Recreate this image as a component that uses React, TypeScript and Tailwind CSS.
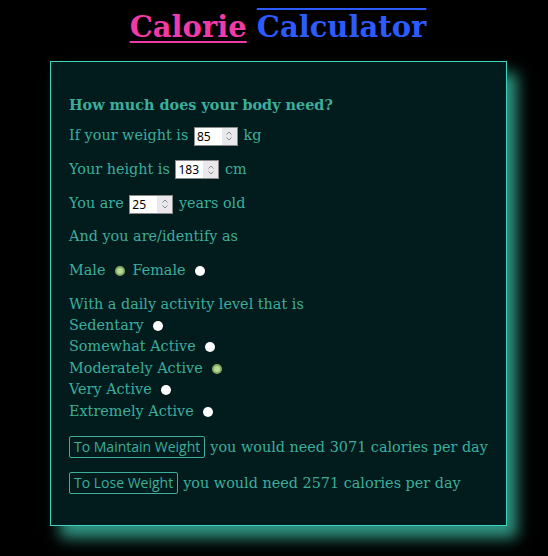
import React from "react";

const serif = { fontFamily: '"DejaVu Serif", serif' };

function Radio({ checked }: { checked?: boolean }) {
  return checked ? (
    <span className="inline-block w-[10px] h-[10px] rounded-full bg-[#b9d99a] border-[2px] border-[#86ad63] align-middle" />
  ) : (
    <span className="inline-block w-[10px] h-[10px] rounded-full bg-white align-middle" />
  );
}

function Num({ v }: { v: string }) {
  return (
    <span
      className="inline-flex w-[44px] h-[19px] bg-white text-black text-[12px] border border-[#8a8a8a] align-middle mx-[1px] items-stretch"
      style={{ fontFamily: '"Noto Sans", sans-serif' }}
    >
      <span className="flex-1 pl-[2px] leading-[17px]">{v}</span>
      <span className="w-[15px] bg-[#e9e9ed] flex items-center justify-center">
        <svg width="8" height="12" viewBox="0 0 8 12" fill="none" stroke="#8a8a8a" strokeWidth="1">
          <path d="M1.5 4.5 L4 2 L6.5 4.5" />
          <path d="M1.5 7.5 L4 10 L6.5 7.5" />
        </svg>
      </span>
    </span>
  );
}

const btn =
  "border border-[#3dae9c] rounded-[2px] px-[4px] text-[14px] leading-[20px] mr-[5px] whitespace-nowrap";

export default function App() {
  return (
    <div className="min-h-[556px] bg-black overflow-hidden" style={serif}>
      <h1 className="text-center text-[29px] font-bold leading-none pt-[13px] pl-[8px]">
        <span className="text-[#ef3aa8] underline decoration-[2px] underline-offset-[4px]">Calorie</span>{" "}
        <span className="text-[#2c5cff] overline decoration-[2px]">Calculator</span>
      </h1>
      <div className="ml-[50px] mt-[19px] w-[457px] h-[465px] border border-[#3ad6c0] bg-[#021b1c] px-[18px] pt-[34px] text-[#3dae9c] text-[14.4px] shadow-[10px_12px_14px_rgba(64,200,175,0.75)]">
        <div className="font-bold leading-[18px]">How much does your body need?</div>
        <div className="mt-[12px] leading-[19px]">If your weight is <Num v="85" /> kg</div>
        <div className="mt-[14px] leading-[19px]">Your height is <Num v="183" /> cm</div>
        <div className="mt-[15px] leading-[19px]">You are <Num v="25" /> years old</div>
        <div className="mt-[13px] leading-[19px]">And you are/identify as</div>
        <div className="mt-[15px] leading-[19px] flex items-center">
          <span>Male</span>
          <span className="ml-[10px]"><Radio checked /></span>
          <span className="ml-[7px]">Female</span>
          <span className="ml-[9px]"><Radio /></span>
        </div>
        <div className="mt-[15px] leading-[19px]">With a daily activity level that is</div>
        <div className="flex flex-col mt-[1px]">
          {[
            ["Sedentary", false],
            ["Somewhat Active", false],
            ["Moderately Active", true],
            ["Very Active", false],
            ["Extremely Active", false],
          ].map(([l, c]) => (
            <div key={l as string} className="h-[21.6px] flex items-center">
              <span>{l as string}</span>
              <span className="ml-[9px]"><Radio checked={c as boolean} /></span>
            </div>
          ))}
        </div>
        <div className="mt-[14px] leading-[20px] flex items-center whitespace-nowrap">
          <span className={btn} style={{ fontFamily: '"Open Sans", sans-serif' }}>
            To Maintain Weight
          </span>
          you would need 3071 calories per day
        </div>
        <div className="mt-[14px] leading-[20px] flex items-center whitespace-nowrap">
          <span className={btn} style={{ fontFamily: '"Open Sans", sans-serif' }}>
            To Lose Weight
          </span>
          you would need 2571 calories per day
        </div>
      </div>
    </div>
  );
}
